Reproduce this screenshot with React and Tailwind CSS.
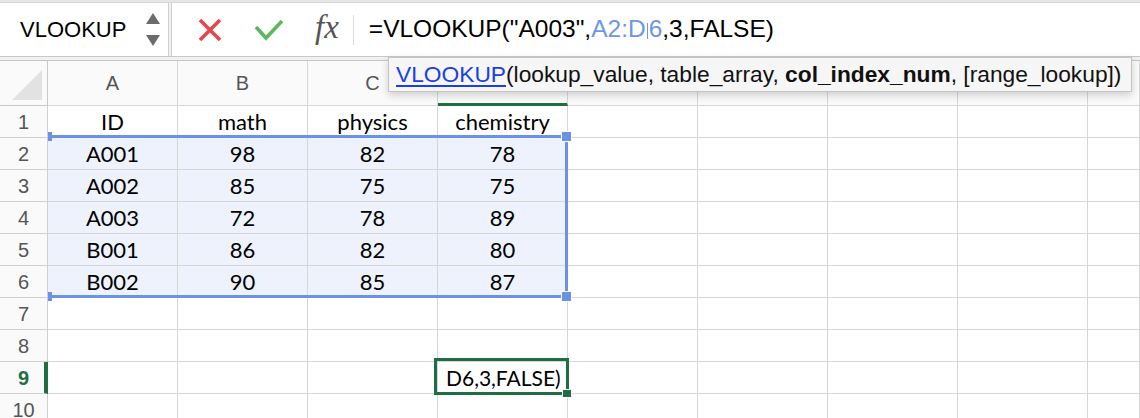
import React from "react";

const data = [
  ["ID", "math", "physics", "chemistry"],
  ["A001", "98", "82", "78"],
  ["A002", "85", "75", "75"],
  ["A003", "72", "78", "89"],
  ["B001", "86", "82", "80"],
  ["B002", "90", "85", "87"],
];

const cols = ["A", "B", "C", "D", "E", "F", "G", "H", "I"];

function NameBox() {
  return (
    <div className="w-[169px] h-full bg-white border-r border-[#cfcfcf] flex items-center pl-[20px] pr-[8px]">
      <span className="text-[22px] leading-none text-black flex-1">VLOOKUP</span>
      <div className="flex flex-col gap-[11px] items-center">
        <svg width="14" height="11" viewBox="0 0 14 11">
          <path d="M7 0 L14 11 L0 11 Z" fill="#6b6b6b" />
        </svg>
        <svg width="14" height="11" viewBox="0 0 14 11">
          <path d="M0 0 L14 0 L7 11 Z" fill="#6b6b6b" />
        </svg>
      </div>
    </div>
  );
}

function FormulaBar() {
  return (
    <div className="flex-1 h-full bg-white border-l border-[#cfcfcf] flex items-center">
      {/* cancel */}
      <svg width="24" height="24" viewBox="0 0 24 24" className="ml-[26px]">
        <path d="M2 2 L22 22 M22 2 L2 22" stroke="#e2484d" strokeWidth="3.6" />
      </svg>
      {/* confirm */}
      <svg width="30" height="22" viewBox="0 0 30 22" className="ml-[32px]">
        <path d="M2 8 L12 19 L28 2" stroke="#5cb85c" strokeWidth="3.6" fill="none" />
      </svg>
      <span className="ml-[31px] font-['Liberation_Serif',serif] italic text-[33px] text-[#555] leading-none pb-[4px]">
        fx
      </span>
      <div className="ml-[14px] w-px h-[30px] bg-[#dcdcdc]" />
      <div className="ml-[15px] text-[24.5px] leading-none text-black whitespace-nowrap">
        =VLOOKUP("A003",
        <span className="text-[#6f95e8]">
          A2:D
          <span className="inline-block w-px h-[16px] bg-[#6f95e8] align-middle mx-[1px]" />
          6
        </span>
        ,3,FALSE)
      </div>
    </div>
  );
}

function Cell({ children, fill, left }) {
  return (
    <div
      className={`h-[32px] border-r border-b border-[#d6d6d6] flex items-center leading-none text-black font-['Lato',sans-serif] ${
        fill ? "bg-[#edf2fd]" : "bg-white"
      } ${left ? "justify-start pl-[8px] text-[21px]" : "justify-center text-[22px]"}`}
    >
      {children}
    </div>
  );
}

export default function App() {
  return (
    <div className="w-[1140px] h-[418px] overflow-hidden bg-white relative font-['Liberation_Sans',Arial,sans-serif]">
      {/* toolbar */}
      <div className="h-[57px] pt-[2px] bg-[#e6e6e6] border-b border-[#c9c9c9] flex">
        <div className="flex w-full h-full border-t border-[#d8d8d8]">
          <NameBox />
          <div className="w-[2px] bg-[#f1f1f1]" />
          <FormulaBar />
        </div>
      </div>
      <div className="h-[4px] bg-[#f1f1f1] border-b border-[#c4c4c4]" />

      {/* sheet */}
      <div className="grid grid-cols-[48px_repeat(8,130px)_52px]">
        {/* header row */}
        <div className="h-[45px] border-r border-b border-[#c8c8c8] bg-[#fafafa] flex items-end justify-end p-[5px]">
          <svg width="30" height="30" viewBox="0 0 30 30">
            <path d="M30 0 L30 30 L0 30 Z" fill="#e2e2e2" />
          </svg>
        </div>
        {cols.map((c) => (
          <div
            key={c}
            className={`h-[45px] border-r border-b border-[#d6d6d6] bg-[#fafafa] flex items-center justify-center leading-none text-[20px] text-[#555] ${
              c === "D" ? "border-b-[3px] border-b-[#1f6e43] pt-[2px]" : ""
            }`}
          >
            {c}
          </div>
        ))}

        {/* rows */}
        {Array.from({ length: 10 }, (_, r) => {
          const rowNum = r + 1;
          const active = rowNum === 9;
          return (
            <React.Fragment key={rowNum}>
              <div
                className={`h-[32px] border-r border-b border-[#d0d0d0] bg-[#fafafa] flex items-center justify-center leading-none text-[20px] ${
                  active
                    ? "text-[#1f6e43] font-bold border-r-[4px] border-r-[#1f6e43] pl-[3px]"
                    : "text-[#555]"
                }`}
              >
                {rowNum}
              </div>
              {cols.map((c, ci) => {
                const value = data[r] && ci < 4 ? data[r][ci] : "";
                const fill = rowNum >= 2 && rowNum <= 6 && ci < 4;
                return (
                  <Cell key={c} fill={fill} left={active && c === "D"}>
                    {active && c === "D" ? "D6,3,FALSE)" : value}
                  </Cell>
                );
              })}
            </React.Fragment>
          );
        })}
      </div>

      {/* range highlight A2:D6 */}
      <div className="absolute left-[51px] top-[135px] w-[517px] h-[3px] bg-[#6a93e6]" />
      <div className="absolute left-[51px] top-[295px] w-[517px] h-[3px] bg-[#6a93e6]" />
      <div className="absolute left-[565px] top-[135px] w-[3px] h-[163px] bg-[#6a93e6]" />
      <div className="absolute left-[48px] top-[132px] w-[4px] h-[9px] bg-[#6a93e6]" />
      <div className="absolute left-[48px] top-[292px] w-[4px] h-[9px] bg-[#6a93e6]" />
      <div className="absolute left-[562px] top-[132px] w-[9px] h-[9px] bg-[#6a93e6] outline outline-1 outline-white" />
      <div className="absolute left-[562px] top-[292px] w-[9px] h-[9px] bg-[#6a93e6] outline outline-1 outline-white" />

      {/* active cell D9 */}
      <div className="absolute left-[434px] top-[358px] w-[135px] h-[37px] border-[3px] border-[#1f6e43]" />
      <div className="absolute left-[563px] top-[390px] w-[8px] h-[7px] bg-[#1f6e43] outline outline-1 outline-white" />

      {/* function tooltip */}
      <div className="absolute left-[388px] top-[57px] w-[744px] h-[35px] bg-[#f6f6f6] border border-[#c4c4c4] shadow-[0_3px_8px_rgba(0,0,0,0.18)] flex items-center pl-[7px] text-[22.75px] leading-none text-[#111] whitespace-nowrap">
        <span className="text-[#1b3fe6] underline decoration-[1.5px] underline-offset-[3px]">VLOOKUP</span>
        <span>(lookup_value, table_array,&nbsp;</span>
        <span className="font-bold">col_index_num</span>
        <span>, [range_lookup])</span>
      </div>
    </div>
  );
}
